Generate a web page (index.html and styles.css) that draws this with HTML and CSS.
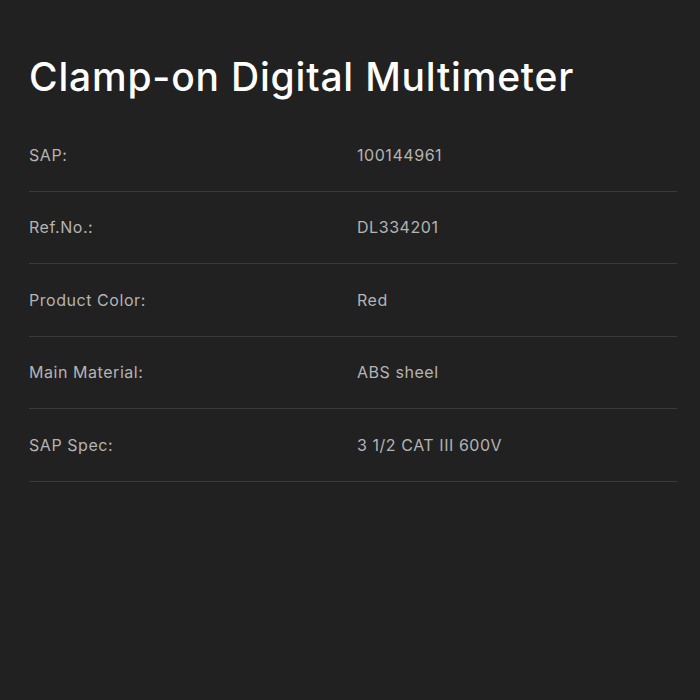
FILE: index.html
```html
<!DOCTYPE html>
<html>
<head>
<meta charset="utf-8">
<link rel="stylesheet" href="styles.css">
</head>
<body>
<div class="page">
  <h1 class="title">Clamp-on Digital Multimeter</h1>
  <div class="specs">
    <div class="row"><div class="label">SAP:</div><div class="value">100144961</div></div>
    <div class="row"><div class="label">Ref.No.:</div><div class="value">DL334201</div></div>
    <div class="row"><div class="label">Product Color:</div><div class="value">Red</div></div>
    <div class="row"><div class="label">Main Material:</div><div class="value">ABS sheel</div></div>
    <div class="row"><div class="label">SAP Spec:</div><div class="value">3 1/2 CAT III 600V</div></div>
  </div>
</div>
</body>
</html>
```

FILE: styles.css
```css
html, body {
  margin: 0;
  padding: 0;
  background: #212121;
  width: 700px;
  height: 700px;
}
.page {
  padding: 53px 23px 0 29px;
  font-family: "Inter", "Open Sans", sans-serif;
}
.title {
  margin: 0;
  font-size: 39px;
  line-height: 48px;
  font-weight: 500;
  color: #ffffff;
  letter-spacing: 0.8px;
}
.specs {
  margin-top: 18px;
}
.row {
  box-sizing: border-box;
  display: grid;
  grid-template-columns: 328px 1fr;
  align-items: center;
  height: 72.5px;
  border-bottom: 1px solid #3a3a3a;
  font-size: 16px;
  letter-spacing: 0.55px;
  color: #b4b4b4;
}
```
